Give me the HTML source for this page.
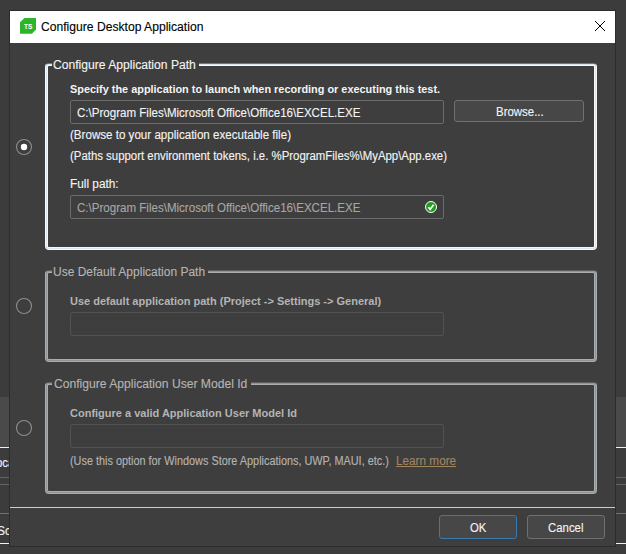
<!DOCTYPE html>
<html><head><meta charset="utf-8">
<style>
*{margin:0;padding:0;box-sizing:border-box}
html,body{width:626px;height:554px;overflow:hidden;background:#3c3c3c;font-family:"Liberation Sans",sans-serif}
body{position:relative}
.a{position:absolute}
.t{position:absolute;white-space:nowrap;font-size:12px;line-height:14px;transform-origin:0 0;-webkit-text-stroke:0.12px currentColor}
.b{font-weight:bold;font-size:11px;-webkit-text-stroke:0}
.grp{position:absolute;border:1px solid #f6f8fa;border-top-color:rgba(246,248,250,.3);border-radius:4px;box-shadow:inset 0 0 0 1px #dde5ee,inset 0 0 0 2px #f6f8fa}
.grp.dis{border-color:#a9adb0;border-top-color:rgba(169,173,176,.3);box-shadow:inset 0 0 0 1px #8e9498,inset 0 0 0 2px #a9adb0}
.gap{position:absolute;background:#3e3e3e;height:4px}
.inp{position:absolute;border:1px solid #6b6b6b;border-radius:2px}
.inp.dis{border-color:#525252}
.btn{position:absolute;border:1px solid #707070;border-radius:3px;background:#474747}
.radio{position:absolute;width:16px;height:16px;border-radius:50%;border:1.5px solid #8c8c8c}
.w{color:#f4f4f4}
.g{color:#b4b4b4}
</style></head><body>
<!-- background app remnants -->
<div class="a" style="left:0;top:397px;width:626px;height:50px;background:#4a4a4a"></div>
<div class="a" style="left:0;top:447px;width:626px;height:1px;background:#f0f0f0"></div>
<div class="a" style="left:0;top:477px;width:626px;height:1px;background:#646464"></div>
<div class="a" style="left:0;top:484px;width:626px;height:1px;background:#646464"></div>
<div class="a" style="left:0;top:513px;width:626px;height:1px;background:#707070"></div>
<div class="a" style="left:0;top:543px;width:626px;height:1px;background:#f0f0f0"></div>
<div class="t" id="bg1" style="left:-4px;top:456px;color:#f0f0f0;transform:scaleX(0.95)">oca</div>
<div class="t" id="bg2" style="left:-3px;top:524px;color:#f0f0f0">Sc</div>

<!-- dialog -->
<div class="a" style="left:9px;top:10px;width:607px;height:537px;background:#2c2c2c"></div>
<div class="a" style="left:10px;top:11px;width:605px;height:535px;background:#3e3e3e"></div>
<div class="a" style="left:10px;top:11px;width:605px;height:32px;background:#fff"></div>
<svg class="a" style="left:20px;top:18px" width="16" height="16" viewBox="0 0 16 16"><path d="M4.5 0H16V11.5L12 15.7H0V4.3Z" fill="#2cb52a"/><text x="8.3" y="11.2" font-size="6.6" font-weight="bold" fill="#fff" text-anchor="middle" font-family="Liberation Sans">TS</text></svg>
<div class="t" id="t1" style="left:41px;top:20px;color:#000;transform:scaleX(1.01)">Configure Desktop Application</div>
<svg class="a" style="left:594px;top:20px" width="12" height="12" viewBox="0 0 12 12"><path d="M1 1L11 11M11 1L1 11" stroke="#000" stroke-width="1"/></svg>

<!-- group 1 -->
<div class="grp" style="left:45px;top:63px;width:552px;height:187px"></div>
<div class="gap" style="left:52px;top:62px;width:147px"></div>
<div class="t w" id="t2" style="left:53px;top:58px;transform:scaleX(1.01)">Configure Application Path</div>
<svg class="a" style="left:14px;top:137px" width="20" height="20" viewBox="0 0 20 20"><circle cx="10" cy="10" r="7.5" fill="none" stroke="#8e8e8e" stroke-width="1.1"/><circle cx="10" cy="10" r="3.2" fill="#fff"/></svg>
<div class="t w b" id="t3" style="left:70px;top:82px;transform:scaleX(0.991)">Specify the application to launch when recording or executing this test.</div>
<div class="inp" style="left:70px;top:100px;width:374px;height:24px"></div>
<div class="t w" id="t4" style="left:77px;top:106px;transform:scaleX(0.963)">C:\Program Files\Microsoft Office\Office16\EXCEL.EXE</div>
<div class="btn" style="left:454px;top:100px;width:130px;height:22px"></div>
<div class="t w" id="t5" style="left:496px;top:105px;transform:scaleX(0.954)">Browse...</div>
<div class="t w" id="t6" style="left:70px;top:128px;transform:scaleX(0.966)">(Browse to your application executable file)</div>
<div class="t w" id="t7" style="left:70px;top:149px;transform:scaleX(0.95)">(Paths support environment tokens, i.e. %ProgramFiles%\MyApp\App.exe)</div>
<div class="t w" id="t8" style="left:70px;top:177px;transform:scaleX(0.985)">Full path:</div>
<div class="inp" style="left:70px;top:195px;width:374px;height:24px"></div>
<div class="t" id="t9" style="left:77px;top:201px;color:#a6a6a6;transform:scaleX(0.963)">C:\Program Files\Microsoft Office\Office16\EXCEL.EXE</div>
<svg class="a" style="left:425px;top:201px" width="12" height="12" viewBox="0 0 12 12"><circle cx="6" cy="6" r="5.5" fill="#249a24" stroke="#fff" stroke-width="1"/><path d="M3.4 6.3L5.2 8.3L8.6 3.8" fill="none" stroke="#fff" stroke-width="1.7"/></svg>

<!-- group 2 -->
<div class="grp dis" style="left:45px;top:270px;width:552px;height:92px"></div>
<div class="gap" style="left:52px;top:269px;width:156px"></div>
<div class="t g" id="t10" style="left:53px;top:265px">Use Default Application Path</div>
<svg class="a" style="left:14px;top:296px" width="20" height="20" viewBox="0 0 20 20"><circle cx="10" cy="10" r="7.5" fill="none" stroke="#8e8e8e" stroke-width="1.1"/></svg>
<div class="t g b" id="t11" style="left:70px;top:294px">Use default application path (Project -&gt; Settings -&gt; General)</div>
<div class="inp dis" style="left:70px;top:312px;width:374px;height:24px"></div>

<!-- group 3 -->
<div class="grp dis" style="left:45px;top:382px;width:552px;height:112px"></div>
<div class="gap" style="left:52px;top:381px;width:199px"></div>
<div class="t g" id="t12" style="left:54px;top:377px;transform:scaleX(1.01)">Configure Application User Model Id</div>
<svg class="a" style="left:14px;top:418px" width="20" height="20" viewBox="0 0 20 20"><circle cx="10" cy="10" r="7.5" fill="none" stroke="#8e8e8e" stroke-width="1.1"/></svg>
<div class="t g b" id="t13" style="left:70px;top:406px">Configure a valid Application User Model Id</div>
<div class="inp dis" style="left:70px;top:424px;width:374px;height:24px"></div>
<div class="t g" id="t14" style="left:70px;top:454px;transform:scaleX(0.906)">(Use this option for Windows Store Applications, UWP, MAUI, etc.)</div>
<div class="t" id="t15" style="left:396px;top:454px;color:#a2845f;text-decoration:underline;transform:scaleX(0.98)">Learn more</div>

<div class="a" style="left:10px;top:507px;width:605px;height:1px;background:#cdcdcd"></div>
<div class="btn" style="left:439px;top:515px;width:78px;height:24px;border-color:#3a7aae"></div>
<div class="t w" id="t16" style="left:470px;top:521px;transform:scaleX(0.94)">OK</div>
<div class="btn" style="left:527px;top:515px;width:78px;height:24px"></div>
<div class="t w" id="t17" style="left:548px;top:521px;transform:scaleX(0.95)">Cancel</div>
</body></html>
